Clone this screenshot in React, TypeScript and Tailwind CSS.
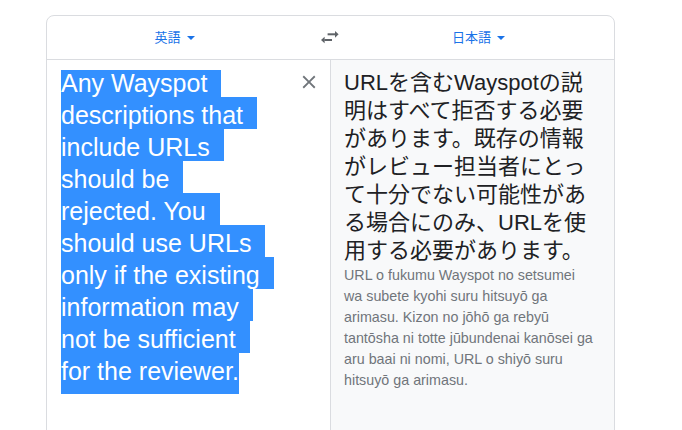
import React from "react";

const lines = [
  "Any Wayspot ",
  "descriptions that ",
  "include URLs ",
  "should be ",
  "rejected. You ",
  "should use URLs ",
  "only if the existing ",
  "information may ",
  "not be sufficient ",
  "for the reviewer.",
];

function Caret() {
  return (
    <svg width="8" height="4" viewBox="0 0 8 4" className="ml-[6px]">
      <path d="M0 0 L8 0 L4 4 Z" fill="#1a73e8" />
    </svg>
  );
}

function SwapIcon() {
  return (
    <svg width="18" height="13" viewBox="0 0 18 13">
      <path d="M14 0 L17.6 3.3 L14 6.7 Z" fill="#5f6368" />
      <rect x="6.6" y="2.3" width="7.6" height="2" fill="#5f6368" />
      <path d="M3.6 5.7 L0 9 L3.6 12.3 Z" fill="#5f6368" />
      <rect x="3.4" y="8" width="7.6" height="2" fill="#5f6368" />
    </svg>
  );
}

function CloseIcon() {
  return (
    <svg width="22" height="22" viewBox="0 0 24 24">
      <path
        d="M19 6.41L17.59 5 12 10.59 6.41 5 5 6.41 10.59 12 5 17.59 6.41 19 12 13.41 17.59 19 19 17.59 13.41 12z"
        fill="#70757a"
      />
    </svg>
  );
}

export default function App() {
  return (
    <div className="h-[430px] overflow-hidden bg-white font-['Liberation_Sans','Noto_Sans_CJK_JP',sans-serif]">
      <div className="ml-[46px] mt-[15px] w-[569px] h-[440px] border border-[#dadce0] rounded-t-[8px] flex flex-col">
        <div className="flex h-[44px] border-b border-[#dadce0] items-center shrink-0">
          <button className="w-[255px] flex items-center justify-center text-[13px] text-[#1a73e8]">
            <span>英語</span>
            <Caret />
          </button>
          <button className="w-[56px] flex items-center justify-center">
            <SwapIcon />
          </button>
          <button className="flex-1 pr-[15px] flex items-center justify-center text-[13px] text-[#1a73e8]">
            <span>日本語</span>
            <Caret />
          </button>
        </div>
        <div className="flex flex-1">
          <div className="w-[283px] flex items-start pl-[14px]">
            <div className="flex-1 pt-[5px] text-[25px] text-white">
              {lines.map((l, i) => {
                const first = i === 0;
                const last = i === lines.length - 1;
                return (
                  <div key={i} className={first ? "h-[32px] flex items-end" : "flex items-start"}>
                    <span
                      className={
                        first
                          ? "block whitespace-pre bg-[#3390ff] h-[27px] leading-[27px] pr-[7px]"
                          : last
                          ? "block whitespace-pre bg-[#3390ff] h-[41px] pt-[2px] leading-[32px]"
                          : "block whitespace-pre bg-[#3390ff] h-[32px] pt-[2px] leading-[32px] pr-[7px]"
                      }
                    >
                      {l}
                    </span>
                  </div>
                );
              })}
            </div>
            <button className="mt-[11px] mr-[10px] w-[22px] h-[22px] shrink-0">
              <CloseIcon />
            </button>
          </div>
          <div className="flex-1 bg-[#f8f9fa] border-l border-[#dadce0] pl-[13px] pt-[9px]">
            <div className="w-[252px]">
              <div className="text-[22px] leading-[28px] text-[#202124]">
                URLを含むWayspotの説明はすべて拒否する必要があります。既存の情報がレビュー担当者にとって十分でない可能性がある場合にのみ、URLを使用する必要があります。
              </div>
              <div className="text-[14.3px] leading-[21px] text-[#70757a]">
                URL o fukumu Wayspot no setsumei wa subete kyohi suru hitsuyō ga arimasu. Kizon no jōhō ga rebyū tantōsha ni totte jūbundenai kanōsei ga aru baai ni nomi, URL o shiyō suru hitsuyō ga arimasu.
              </div>
            </div>
          </div>
        </div>
      </div>
    </div>
  );
}
